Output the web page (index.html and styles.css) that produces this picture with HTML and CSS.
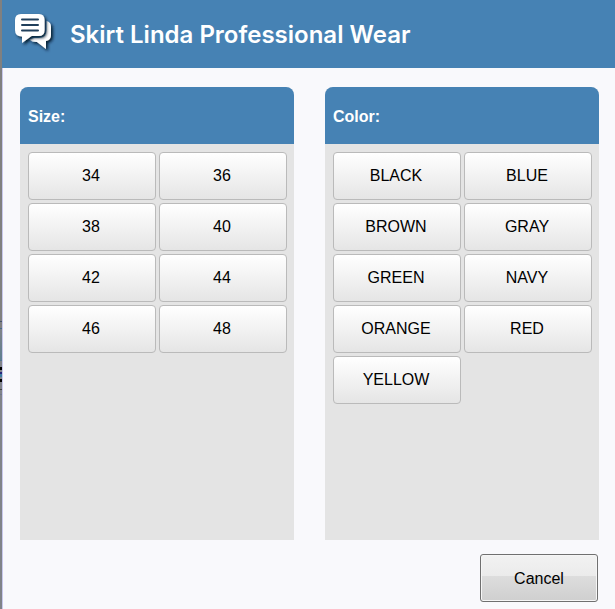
FILE: index.html
```html
<!DOCTYPE html>
<html lang="en">
<head>
<meta charset="utf-8">
<title>Skirt Linda Professional Wear</title>
<link rel="stylesheet" href="styles.css">
</head>
<body>
<div class="dialog">
  <header class="titlebar">
    <svg class="logo" viewBox="0 0 48 48" aria-hidden="true">
      <defs>
        <filter id="shadow" x="-20%" y="-20%" width="150%" height="150%">
          <feDropShadow dx="2" dy="2" stdDeviation="1.5" flood-color="#06192b" flood-opacity=".9"/>
        </filter>
      </defs>
      <g fill="#fff" filter="url(#shadow)">
        <path d="M36.500 11Q41 12 41 17v8q0 5-5 6v8l-9-7q-5 0-8-2.500l5-1.500h5q7.500-1 7.500-8z"/>
      </g>
      <g fill="#fff" filter="url(#shadow)">
        <path d="M11 4h18q5.500 0 5.500 6v10q0 6-6 6h-7L12 33v-6.500q-7 0-7-6.500V10q0-6 6-6z"/>
      </g>
      <path d="M12 9.500h16M12 15h16M12 20.500h16" stroke="#203f5b" stroke-width="2" stroke-linecap="round"/>
    </svg>
    <h1 class="title">Skirt Linda Professional Wear</h1>
  </header>
  <main class="panels">
    <section class="panel" aria-labelledby="size">
      <h2 class="panel-title" id="size">Size:</h2>
      <div class="options">
        <button class="option" type="button">34</button>
        <button class="option" type="button">36</button>
        <button class="option" type="button">38</button>
        <button class="option" type="button">40</button>
        <button class="option" type="button">42</button>
        <button class="option" type="button">44</button>
        <button class="option" type="button">46</button>
        <button class="option" type="button">48</button>
      </div>
    </section>
    <section class="panel" aria-labelledby="color">
      <h2 class="panel-title" id="color">Color:</h2>
      <div class="options">
        <button class="option" type="button">BLACK</button>
        <button class="option" type="button">BLUE</button>
        <button class="option" type="button">BROWN</button>
        <button class="option" type="button">GRAY</button>
        <button class="option" type="button">GREEN</button>
        <button class="option" type="button">NAVY</button>
        <button class="option" type="button">ORANGE</button>
        <button class="option" type="button">RED</button>
        <button class="option" type="button">YELLOW</button>
      </div>
    </section>
  </main>
  <footer class="actions">
    <button class="cancel" type="button">Cancel</button>
  </footer>
</div>
</body>
</html>
```
FILE: styles.css
```css
* {
  box-sizing: border-box;
}

body {
  margin: 0;
  font-family: "Liberation Sans", Arial, sans-serif;
  font-size: 16px;
  color: #000;
  background: linear-gradient(#808080 0 321px, #45536a 321px 322px, #808080 322px 328px, #466a8c 328px 329px, #808389 329px, #5f7f91 360px, #466a8c 361px, #808389 361px 367px, #000 367px 370px, #808389 370px 372px, #26267a 372px 374px, #3c7ca0 374px 377px, #808389 377px 379px, #000 379px 382px, #808389 382px 389px, #444 389px 390px, #808389 390px 394px, #70778a 394px 395px, #808389 395px);
}

.dialog {
  display: flex;
  flex-direction: column;
  min-height: 100vh;
  margin-left: 2px;
  border-left: 1px solid #c8c8ec;
  background: #f9f9fc;
}

.titlebar {
  display: flex;
  align-items: center;
  height: 68px;
  margin-left: -1px;
  padding-left: 8px;
  gap: 12px;
  background: #4682b4;
}

.logo {
  width: 48px;
  height: 48px;
}

.title {
  margin: 0;
  padding-top: 2px;
  font-family: Inter, "Liberation Sans", sans-serif;
  font-size: 24px;
  font-weight: 600;
  line-height: 32px;
  color: #fff;
}

.panels {
  flex: 1;
  display: grid;
  grid-template-columns: 1fr 1fr;
  gap: 31px;
  padding: 19px 16px 0 17px;
}

.panel {
  display: flex;
  flex-direction: column;
  overflow: hidden;
  border-radius: 8px 8px 0 0;
  background: #e4e4e4;
}

.panel-title {
  margin: 0;
  padding: 18px 8px 15px;
  font-size: 16px;
  font-weight: 700;
  line-height: 24px;
  color: #fff;
  background: #4682b4;
}

.options {
  display: grid;
  grid-template-columns: 1fr 1fr;
  gap: 3px;
  padding: 8px 7px 8px 8px;
}

.option {
  height: 48px;
  padding: 0 2px 0 0;
  border: 1px solid #bababa;
  border-radius: 4px;
  font: inherit;
  color: inherit;
  background: linear-gradient(#fff, #e5e5e5);
}

.actions {
  display: flex;
  justify-content: flex-end;
  padding: 14px 17px 7px;
}

.cancel {
  width: 118px;
  height: 48px;
  padding: 2px 0 0;
  border: 1px solid #707070;
  border-radius: 3px;
  font: inherit;
  color: inherit;
  background: linear-gradient(#f2f2f2, #ebebeb 46%, #dddddd 46%, #cfcfcf);
  box-shadow: inset 0 0 0 1px #f6f6f6;
}
```
